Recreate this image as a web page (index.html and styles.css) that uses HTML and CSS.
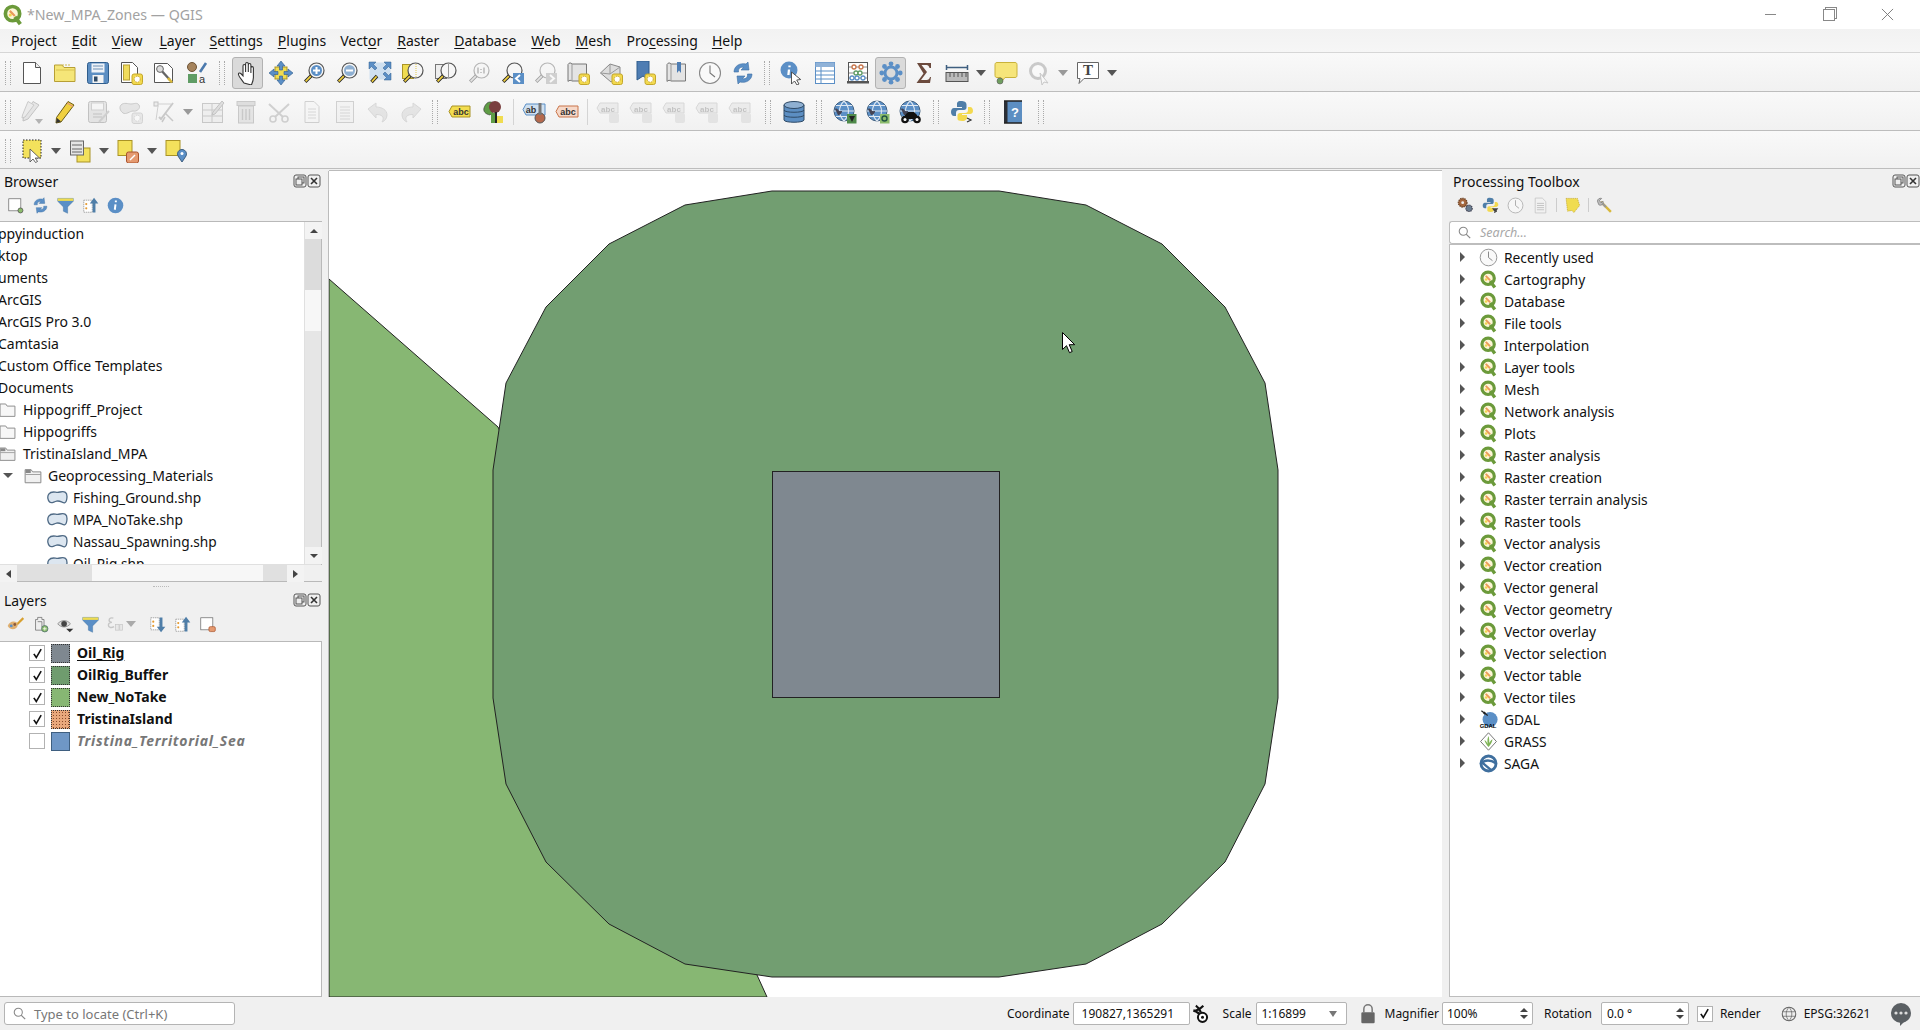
FILE: index.html
```html
<!DOCTYPE html>
<html lang="en">
<head>
<meta charset="utf-8">
<title>*New_MPA_Zones — QGIS</title>
<link rel="stylesheet" href="styles.css">
</head>
<body>
<svg class="defs" aria-hidden="true">
<defs>
<g id="mg"><circle cx="14.5" cy="9.5" r="7.5" fill="#f6f6f6" stroke="#555" stroke-width="1.2"/><path d="M9.2 14.8 3.2 20.8" stroke="#222" stroke-width="3.4"/><path d="M8.8 15.2 3.6 20.4" stroke="#f0d040" stroke-width="1.7"/></g>
<g id="gb"><rect x="13" y="13" width="10.5" height="10.5" rx="2" fill="#f2d94e" stroke="#c4a72a"/><circle cx="18.2" cy="18.2" r="3" fill="#fff" stroke="#c9a227" stroke-dasharray="1.5 1"/></g>
</defs>
<symbol id="new" viewBox="0 0 24 24"><path d="M3.5 1.5h12l5 5v16h-17z" fill="#fff" stroke="#555"/><path d="M15.5 1.5v5h5" fill="#eee" stroke="#555"/></symbol>
<symbol id="open" viewBox="0 0 24 24"><path d="M1.5 20.5V4h7.5l2 2.5h11v14z" fill="#f5e678" stroke="#b79f35"/><path d="M3 9h18" stroke="#d9c24e"/><path d="M9 4h9" stroke="#cdb74a" stroke-dasharray="2 1"/></symbol>
<symbol id="save" viewBox="0 0 24 24"><rect x="1.5" y="1.5" width="21" height="21" rx="2" fill="#5c8ec2" stroke="#2f5d8c"/><rect x="5.5" y="2.5" width="13" height="9" fill="#eef2f7"/><path d="M7 5h10M7 8h10" stroke="#6c90b5"/><rect x="6.5" y="14" width="11" height="8" fill="#f3f3f3"/><rect x="8" y="15.5" width="3.5" height="5" fill="#2f4a66"/></symbol>
<symbol id="layout" viewBox="0 0 24 24"><path d="M2.5 1.5h11l5 5v15h-16z" fill="#fff" stroke="#555"/><rect x="4.5" y="4" width="6" height="15" fill="#f0dc5c" stroke="#b79f35"/><use href="#gb"/></symbol>
<symbol id="laym" viewBox="0 0 24 24"><path d="M2.5 2.5h13l5 5v14h-18z" fill="#fff" stroke="#555"/><path d="M8 8l10 11" stroke="#666" stroke-width="2.4"/><circle cx="8" cy="8" r="3.4" fill="#ddd" stroke="#666"/><path d="M16 17l4 4.500" stroke="#d8b83a" stroke-width="2.600"/></symbol>
<symbol id="style" viewBox="0 0 24 24"><circle cx="7" cy="6" r="4.500" fill="#a5835c" stroke="#6e5335"/><path d="M15 11 21 2" stroke="#4b79ad" stroke-width="2.600"/><rect x="3" y="13" width="9" height="9" fill="#5f9c64"/><text x="14" y="22" class="svt">a</text></symbol>
<symbol id="hand" viewBox="0 0 24 24"><path d="M8 22c-2-3-5-6-5.500-8.500-.3-1.500 1.300-2 2.300-1L7 14.800V5c0-2 2.600-2 2.600 0v6-8c0-2 2.700-2 2.700 0v8-7c0-2 2.600-2 2.600 0v8-5c0-1.800 2.500-1.800 2.500 0v9.500c0 3-1 5-2 7.500z" fill="#fff" stroke="#333" stroke-width="1.100"/></symbol>
<symbol id="pansel" viewBox="0 0 24 24"><rect x="6" y="6" width="12" height="12" fill="#f0dc50" stroke="#a99326"/><path d="M12 0l4 5h-2.500v4h-3V5H8zM12 24l4-5h-2.500v-4h-3v4H8zM0 12l5-4v2.500h4v3H5V16zM24 12l-5-4v2.500h-4v3h4V16z" fill="#5b8fc6" stroke="#2f5d8c" stroke-width=".6"/></symbol>
<symbol id="zin" viewBox="0 0 24 24"><use href="#mg"/><circle cx="14.500" cy="9.500" r="5.500" fill="#5b8fc6"/><path d="M14.500 6v7M11 9.500h7" stroke="#fff" stroke-width="2"/></symbol>
<symbol id="zout" viewBox="0 0 24 24"><use href="#mg"/><circle cx="14.500" cy="9.500" r="5.500" fill="#8fb0d2"/><path d="M11 9.500h7" stroke="#fff" stroke-width="2"/></symbol>
<symbol id="zfull" viewBox="0 0 24 24"><rect x="1.500" y="1.500" width="21" height="17" fill="#cfe0f0"/><path d="M1 1h7L5.500 3.500 9 7 7 9 3.500 5.500 1 8zM23 1h-7l2.500 2.500L15 7l2 2 3.500-3.500L23 8zM23 19h-7l2.500-2.500L15 13l2-2 3.500 3.500L23 12z" fill="#5b8fc6" stroke="#2f5d8c" stroke-width=".5"/><path d="M9 15 3.500 21" stroke="#222" stroke-width="3.400"/><path d="M8.600 15.400 3.900 20.600" stroke="#f0d040" stroke-width="1.700"/></symbol>
<symbol id="zsel" viewBox="0 0 24 24"><rect x="1.500" y="3.500" width="11" height="14" fill="#f0dc50" stroke="#a99326"/><use href="#mg"/><path d="M15 3v13" stroke="#e0c94a" stroke-dasharray="1 1"/></symbol>
<symbol id="zlay" viewBox="0 0 24 24"><rect x="1.500" y="3.500" width="11" height="14" fill="#eee" stroke="#777"/><use href="#mg"/><path d="M14.500 3v13" stroke="#999"/></symbol>
<symbol id="znat" viewBox="0 0 24 24"><use href="#mg"/><path d="M11 6.500v6M14 8v1M14 11v1M17 6.500v6" stroke="#555" stroke-width="1.400"/></symbol>
<symbol id="zlast" viewBox="0 0 24 24"><use href="#mg"/><rect x="13" y="12" width="11" height="11" fill="#5b8fc6"/><path d="M20 14l-4 3.500 4 3.500" fill="none" stroke="#fff" stroke-width="2"/></symbol>
<symbol id="znext" viewBox="0 0 24 24"><use href="#mg"/><rect x="13" y="12" width="11" height="11" fill="#9a9a9a"/><path d="M17 14l4 3.500-4 3.500" fill="none" stroke="#fff" stroke-width="2"/></symbol>
<symbol id="map" viewBox="0 0 24 24"><path d="M2 3.500C3 1.500 5 1.500 6 3h14.500v17H6c-1-1-3-1-4 .5z" fill="#e4e4e4" stroke="#777"/><path d="M6 3v17" stroke="#999"/><use href="#gb"/></symbol>
<symbol id="map3" viewBox="0 0 24 24"><path d="M1.500 12 11 3l10 3v9l-9 6z" fill="#ddd" stroke="#888"/><path d="M11 3v10l-9.500-1M11 13l10-7" stroke="#999" fill="none"/><use href="#gb"/></symbol>
<symbol id="bmk" viewBox="0 0 24 24"><path d="M5 0h12v19l-6-4-6 4z" fill="#4e7db3" stroke="#2f5d8c"/><use href="#gb"/></symbol>
<symbol id="bmks" viewBox="0 0 24 24"><path d="M2 3.500C3 1.500 5 1.500 6 3h14.500v17H6c-1-1-3-1-4 .5z" fill="#e4e4e4" stroke="#777"/><path d="M6 3v17" stroke="#999"/><path d="M12 1h4v11l-2-2.500-2 2.500z" fill="#4e7db3"/></symbol>
<symbol id="clock" viewBox="0 0 24 24"><circle cx="12" cy="12" r="10.500" fill="#f9f9f9" stroke="#888" stroke-width="1.100"/><path d="M12 4.500V12l5 4" fill="none" stroke="#777" stroke-width="1.100"/></symbol>
<symbol id="refr" viewBox="0 0 24 24"><path d="M3 11C3 5 9 1.500 15 3l2-2 1 8h-8l2.500-2.500C9 5.500 7 8 7.500 11z" fill="#5b8fc6" stroke="#3a6da3" stroke-width=".6"/><path d="M21 13c0 6-6 9.500-12 8l-2 2-1-8h8l-2.500 2.500c3.500 1 5.500-1.500 5-4.500z" fill="#5b8fc6" stroke="#3a6da3" stroke-width=".6"/></symbol>
<symbol id="ident" viewBox="0 0 24 24"><circle cx="9" cy="9" r="8.500" fill="#5b8fc6"/><path d="M9.500 4.500v1.800M9 8.500 8.400 14" stroke="#fff" stroke-width="2.300"/><path d="M11.500 11v12l3-3 2.500 4 2-1-2.300-4 4-.5z" fill="#fff" stroke="#444" stroke-width=".9"/></symbol>
<symbol id="table" viewBox="0 0 24 24"><rect x="2.500" y="1.500" width="19" height="21" fill="#fff" stroke="#5b8fc6"/><rect x="2.500" y="1.500" width="19" height="4.500" fill="#8fb2d8"/><path d="M3 10h18M3 14h18M3 18h18M8 6v16" stroke="#5b8fc6"/></symbol>
<symbol id="abac" viewBox="0 0 24 24"><rect x="2.500" y="1.500" width="19" height="19" fill="#fff" stroke="#555"/><rect x="1" y="20" width="22" height="2.500" fill="#555"/><path d="M3 6h18M3 12h18M3 17h18" stroke="#888"/><g fill="#fff" stroke-width="1.300"><circle cx="8" cy="6" r="2" stroke="#c9754a"/><circle cx="15" cy="6" r="2" stroke="#c9754a"/><circle cx="10" cy="12" r="2" stroke="#5f9c64"/><circle cx="14" cy="12" r="2" stroke="#5f9c64"/><circle cx="6" cy="17" r="2" stroke="#5b8fc6"/><circle cx="11" cy="17" r="2" stroke="#5b8fc6"/><circle cx="17" cy="17" r="2" stroke="#5b8fc6"/></g></symbol>
<symbol id="tbx" viewBox="0 0 24 24"><circle cx="12" cy="12" r="6" fill="none" stroke="#5b8fc6" stroke-width="3"/><g fill="#5b8fc6"><circle cx="12" cy="2.800" r="2.400"/><circle cx="12" cy="21.200" r="2.400"/><circle cx="2.800" cy="12" r="2.400"/><circle cx="21.200" cy="12" r="2.400"/><circle cx="5.500" cy="5.500" r="2.400"/><circle cx="18.500" cy="18.500" r="2.400"/><circle cx="5.500" cy="18.500" r="2.400"/><circle cx="18.500" cy="5.500" r="2.400"/></g></symbol>
<symbol id="sum" viewBox="0 0 24 24"><path d="M5 2h14v5h-1.500c-.5-2-1.500-3-3-3H9.500l5.500 7-6 8h5.500c2 0 3-1 3.500-3H19l-1 6H4.500l7-9.500z" fill="#6b4a3d"/></symbol>
<symbol id="ruler" viewBox="0 0 24 24"><path d="M1.500 4v5M22.500 4v5M2 6.500h20" stroke="#3f5f80" stroke-width="1.500"/><rect x="1" y="11.500" width="22" height="9" fill="#bbb" stroke="#555"/><path d="M5 12v4M9 12v4M13 12v4M17 12v4M21 12v4" stroke="#555"/></symbol>
<symbol id="tip" viewBox="0 0 24 24"><path d="M3 1.500h18c1.500 0 2 1 2 2v11c0 1-.5 2-2 2H11l-4 5v-5H3c-1.500 0-2-1-2-2v-11c0-1 .5-2 2-2z" fill="#f6e57a" stroke="#c9b23a"/><circle cx="6" cy="20" r="3" fill="#6f9e5f" stroke="#555" stroke-width=".6"/></symbol>
<symbol id="qtool" viewBox="0 0 24 24"><circle cx="11" cy="10" r="7.500" fill="#fff" stroke="#888" stroke-width="3"/><path d="M13 12l8 10-4-1-2 3z" fill="#fff" stroke="#888"/></symbol>
<symbol id="annot" viewBox="0 0 24 24"><path d="M1.500 1.500h21v16H8l-5 5 1-5H1.500z" fill="#fff" stroke="#666"/><text x="12" y="14" text-anchor="middle" class="svs">T</text></symbol>
<symbol id="pen" viewBox="0 0 24 24"><path d="M15 1.500 21 5 8 22l-5 1 .5-5.500z" fill="#f0d040" stroke="#6b5c16"/><path d="M4 18l4 3.500L3 23z" fill="#333"/><path d="M14 3l6 3.500" stroke="#d88"/></symbol>
<symbol id="pens" viewBox="0 0 24 24"><path d="M13 1.500 19 5 8 19l-5 2 .5-5.500z" fill="#ccc" stroke="#777"/><path d="M8 1.500 14 5 5 17l-3 1 .5-3z" fill="#ddd" stroke="#888"/><path d="M15 19h8l-4 5z" fill="#555"/></symbol>
<symbol id="savee" viewBox="0 0 24 24"><rect x="2.500" y="1.500" width="18" height="21" rx="2" fill="#ccc" stroke="#777"/><rect x="5.500" y="3" width="12" height="7" fill="#f4f4f4" stroke="#999"/><path d="M7 14h9M7 17h9" stroke="#777"/><path d="M13 22 23 11" stroke="#999" stroke-width="2"/></symbol>
<symbol id="addf" viewBox="0 0 24 24"><path d="M2 5c3-3 7-1 10-1s6-2 8 1c2 3-2 7-6 6-3 0-7 4-10 2C1 11 0 7 2 5z" fill="#ccc" stroke="#888"/><use href="#gb"/></symbol>
<symbol id="vert" viewBox="0 0 24 24"><rect x="2" y="2" width="4" height="4" fill="#ddd" stroke="#777"/><path d="M6 6 4 20M6 4h13" stroke="#999"/><path d="M21 3 9 19l-2-2" stroke="#888" stroke-width="2" fill="none"/><path d="M13 13l8 8M10 22l3-5" stroke="#888" stroke-width="1.500"/></symbol>
<symbol id="multi" viewBox="0 0 24 24"><rect x="1.500" y="3.500" width="20" height="19" fill="#e6e6e6" stroke="#888"/><path d="M2 10h19M2 16h19M11 4v18" stroke="#888"/><path d="M21 1l2 2-9 11-3 1 1-3z" fill="#bbb" stroke="#777"/></symbol>
<symbol id="del" viewBox="0 0 24 24"><rect x="3" y="1.500" width="18" height="4" fill="#bbb" stroke="#888"/><rect x="4.500" y="6" width="15" height="17" fill="#ccc" stroke="#888"/><path d="M8.500 9v11M12 9v11M15.500 9v11" stroke="#888" stroke-width="1.400"/></symbol>
<symbol id="cut" viewBox="0 0 24 24"><path d="M2 4l14 13M22 4 8 17" stroke="#999" stroke-width="2"/><circle cx="6" cy="19" r="3" fill="none" stroke="#999" stroke-width="1.600"/><circle cx="18" cy="19" r="3" fill="none" stroke="#999" stroke-width="1.600"/></symbol>
<symbol id="copy" viewBox="0 0 24 24"><path d="M5 1.500h9l5 5v16H5z" fill="#f5f5f5" stroke="#999"/><path d="M8 9h8M8 12h8M8 15h8M8 18h8" stroke="#aaa"/></symbol>
<symbol id="paste" viewBox="0 0 24 24"><rect x="3.500" y="1.500" width="17" height="21" fill="#eee" stroke="#999"/><path d="M7 7h10M7 10h10M7 13h10M7 16h10M7 19h10" stroke="#aaa"/></symbol>
<symbol id="undo" viewBox="0 0 24 24"><path d="M2 9 10 3v4c6 0 11 3 11 8 0 3-2 6-5 7 1-2 2-4 0-6-1-1-3-1.500-6-1.500V18z" fill="#ccc" stroke="#aaa"/></symbol>
<symbol id="redo" viewBox="0 0 24 24"><path d="M22 9 14 3v4C8 7 3 10 3 15c0 3 2 6 5 7-1-2-2-4 0-6 1-1 3-1.500 6-1.500V18z" fill="#ccc" stroke="#aaa"/></symbol>
<symbol id="lab" viewBox="0 0 24 24"><path d="M4 6h18v11H4L1 11.500z" fill="#f3dd4f" stroke="#a99326"/><text x="13" y="15" text-anchor="middle" class="svl">abc</text></symbol>
<symbol id="dia" viewBox="0 0 24 24"><path d="M9 2a7 8 0 0 1 7 6l-7 7C4 14 2 11 3 8s3-6 6-6z" fill="#5f9c46" stroke="#333" stroke-width=".6"/><circle cx="14" cy="7" r="6" fill="#7a3f3f"/><rect x="10" y="13" width="5" height="10" fill="#5f9c46"/><rect x="15" y="16" width="7" height="7" fill="#f0dc50"/><path d="M15 12v11" stroke="#222" stroke-width="2"/></symbol>
<symbol id="labp" viewBox="0 0 24 24"><path d="M4 4h19v11H4L1 9.500z" fill="#cfe0f0" stroke="#5b8fc6"/><text x="9" y="13" text-anchor="middle" class="svl">ab</text><circle cx="18" cy="18" r="5" fill="#b5694d" stroke="#555"/><path d="M18 3v12" stroke="#777" stroke-width="3"/></symbol>
<symbol id="labo" viewBox="0 0 24 24"><path d="M4 6h19v11H4L1 11.500z" fill="#f6d8c8" stroke="#c9754a"/><text x="13" y="15" text-anchor="middle" class="svl">abc</text></symbol>
<symbol id="labg" viewBox="0 0 24 24"><path d="M4 3h18v10H4L1 8z" fill="#ddd" stroke="#aaa"/><text x="12" y="11.500" text-anchor="middle" class="svg">abc</text><rect x="13" y="13" width="10" height="10" rx="2" fill="#ccc"/></symbol>
<symbol id="db" viewBox="0 0 24 24"><path d="M2 5v15c0 3 20 3 20 0V5z" fill="#5c8ec2" stroke="#2f4a66"/><ellipse cx="12" cy="5" rx="10" ry="3.500" fill="#8fb0d2" stroke="#2f4a66"/><path d="M2 10c0 3 20 3 20 0M2 15c0 3 20 3 20 0" fill="none" stroke="#2f4a66"/></symbol>
<symbol id="globe" viewBox="0 0 24 24"><circle cx="11" cy="11" r="10" fill="#5b8fc6" stroke="#3f5f80"/><path d="M11 1c-6 6-6 14 0 20 6-6 6-14 0-20zM1 11h20M3 5.500h16M3 16.500h16" fill="none" stroke="#dfe8f2" stroke-width="1.100"/><path d="M2 9c3-2 3 3 6 2s-1 5-3 4z" fill="#445"/></symbol>
<symbol id="globe1" viewBox="0 0 24 24"><use href="#globe"/><rect x="14" y="14" width="9.500" height="9.500" fill="#4f8a4a"/><path d="M16 16h6l-3 6z" fill="#222"/></symbol>
<symbol id="globe2" viewBox="0 0 24 24"><use href="#globe"/><rect x="14" y="14" width="9.500" height="9.500" fill="#8cbc6c"/><circle cx="18.500" cy="18.500" r="2.500" fill="none" stroke="#254" stroke-width="1.400"/></symbol>
<symbol id="globe3" viewBox="0 0 24 24"><use href="#globe"/><circle cx="6" cy="19.500" r="3.800" fill="#111"/><circle cx="18" cy="19.500" r="3.800" fill="#111"/><path d="M6 15l3-3h6l3 3v4H6z" fill="#111"/><circle cx="6" cy="19.500" r="1.500" fill="#fff"/><circle cx="18" cy="19.500" r="1.500" fill="#fff"/></symbol>
<symbol id="py" viewBox="0 0 24 24"><path d="M11 1C7 1 7 3 7 4.500V7h5v1H4C2 8 1 10 1 12s1 4 3 4h2v-3c0-2 1-3 3-3h5c1.500 0 2.500-1 2.500-2.500V4.500C16.500 2 14 1 11 1z" fill="#4f7ea8"/><path d="M12 21c4 0 5-2 5-3.500V15h-5v-1h8c1.500 0 3-1 3-3s-1-4-3-4h-2v3c0 2-1 3-3 3h-5c-1.500 0-2.500 1-2.500 2.500v3.500C7.500 20 9 21 12 21z" fill="#f3d94f"/><path d="M17 18l4 2-4 2" fill="none" stroke="#333" stroke-width="1.200"/></symbol>
<symbol id="help" viewBox="0 0 24 24"><rect x="3" y="1" width="18" height="22" fill="#5c8ec2"/><rect x="3" y="1" width="3.500" height="22" fill="#2b2f36"/><path d="M3 1h18M3 23h18" stroke="#222" stroke-width="1.500"/><text x="14" y="17" text-anchor="middle" class="svh">?</text></symbol>
<symbol id="sel" viewBox="0 0 24 24"><rect x="3" y="1" width="18" height="18" fill="#f3e15c" stroke="#222" stroke-dasharray="1.500 1.500"/><path d="M10 10v13l3-3 2.500 3.500 2-1-2.300-3.500h4.300z" fill="#fff" stroke="#555" stroke-width=".9"/></symbol>
<symbol id="selat" viewBox="0 0 24 24"><rect x="9" y="9" width="13" height="14" fill="#f3e15c" stroke="#a99326"/><rect x="2.500" y="2" width="13" height="14" fill="#e4e4e4" stroke="#666"/><path d="M4 6h10M4 10h10M4 13h10" stroke="#666"/></symbol>
<symbol id="desel" viewBox="0 0 24 24"><rect x="2" y="1.500" width="14" height="15" fill="#f3e15c" stroke="#a99326"/><rect x="10.500" y="13" width="12" height="11" rx="2" fill="#e59a70" stroke="#a9532c"/><path d="M14 21l5-5" stroke="#fff" stroke-width="1.500"/></symbol>
<symbol id="selpin" viewBox="0 0 24 24"><rect x="2" y="1.500" width="14" height="15" fill="#f3e15c" stroke="#a99326"/><path d="M18 23l-4-6a4.500 4.500 0 1 1 8 0z" fill="#5b8fc6" stroke="#3f5f80"/><circle cx="18" cy="14.500" r="1.500" fill="#fff"/></symbol>
<symbol id="addnew" viewBox="0 0 24 24"><rect x="2.500" y="2.500" width="17" height="17" fill="#fff" stroke="#666"/><circle cx="19" cy="19" r="3.500" fill="#8cbc6c" stroke="#444"/></symbol>
<symbol id="filt" viewBox="0 0 24 24"><path d="M1 2h22v4l-8 8v9l-6-3v-6L1 6z" fill="#5b8fc6" stroke="#3f6f9e" stroke-width=".6"/><rect x="1" y="2" width="22" height="3.500" fill="#f0dc50"/></symbol>
<symbol id="coll" viewBox="0 0 24 24"><rect x="2.500" y="4.500" width="12" height="17" fill="#fff" stroke="#888" stroke-dasharray="2 1"/><circle cx="6" cy="10" r="1.500" fill="#e59a30"/><circle cx="6" cy="16" r="1.500" fill="#e59a30"/><path d="M17 1l6 8h-4v13h-4V9h-4z" fill="#4f7ea8"/></symbol>
<symbol id="expa" viewBox="0 0 24 24"><rect x="2.500" y="2.500" width="12" height="17" fill="#fff" stroke="#888" stroke-dasharray="2 1"/><circle cx="6" cy="8" r="1.500" fill="#e59a30"/><circle cx="6" cy="14" r="1.500" fill="#e59a30"/><path d="M17 23l6-8h-4V2h-4v13h-4z" fill="#4f7ea8"/></symbol>
<symbol id="info" viewBox="0 0 24 24"><circle cx="12" cy="12" r="11" fill="#5b8fc6"/><path d="M12.500 5v2.500M12 10.500 11 18" stroke="#fff" stroke-width="2.800"/></symbol>
<symbol id="style2" viewBox="0 0 24 24"><path d="M14 12 23 3" stroke="#d8a030" stroke-width="3"/><path d="M1 14c2-6 8-8 13-5 2 3 1 6-1 8-4 3-9 2-12-3z" fill="#e0b070"/><circle cx="6" cy="14" r="2" fill="#5b8fc6"/><circle cx="11" cy="12" r="2" fill="#8c5a3a"/></symbol>
<symbol id="addg" viewBox="0 0 24 24"><path d="M8 2h6v3h3v15H5V5h3z" fill="#eee" stroke="#666"/><path d="M8 8h6v8" fill="none" stroke="#666"/><circle cx="18" cy="18" r="4.500" fill="#8cbc6c" stroke="#466"/><path d="M18 15.500v5M15.500 18h5" stroke="#fff"/></symbol>
<symbol id="eye" viewBox="0 0 24 24"><path d="M1 11c5-6 13-6 18 0-5 6-13 6-18 0z" fill="#ddd" stroke="#777"/><circle cx="10" cy="11" r="4" fill="#444"/><path d="M13 18h10l-5 5z" fill="#333"/></symbol>
<symbol id="eps" viewBox="0 0 24 24"><path d="M9 3C6 2 3 3 3 6c0 2 2 3 4 3-2 0-5 1-5 4 0 4 5 4 8 2" fill="none" stroke="#888" stroke-width="2"/><rect x="12" y="12" width="5" height="8" fill="#ddd" stroke="#888"/><rect x="18" y="12" width="4" height="8" fill="#ddd" stroke="#888"/></symbol>
<symbol id="rmv" viewBox="0 0 24 24"><rect x="2.500" y="2.500" width="17" height="17" fill="#fff" stroke="#666"/><rect x="14" y="15" width="9" height="7" rx="2" fill="#e59a70" stroke="#a9532c"/></symbol>
<symbol id="q" viewBox="0 0 24 24"><circle cx="11.500" cy="10.500" r="7.800" fill="#fdf6d8" stroke="#6b9a3a" stroke-width="4"/><path d="M14 14l6 8" stroke="#6b9a3a" stroke-width="4.200"/><path d="M8.500 7.500 14 13" stroke="#ea9a5a" stroke-width="2.400"/><circle cx="9" cy="12" r="1.700" fill="#f1d34c"/></symbol>
<symbol id="gear2" viewBox="0 0 24 24"><circle cx="8" cy="8" r="6" fill="#a5683f" stroke="#6e4324" stroke-dasharray="2 1" stroke-width="2"/><circle cx="8" cy="8" r="2" fill="#eee"/><circle cx="17" cy="16" r="4.500" fill="#6a7c8e" stroke="#445" stroke-dasharray="2 1" stroke-width="1.600"/></symbol>
<symbol id="py2" viewBox="0 0 24 24"><use href="#py"/><path d="M14 16h9l-4.500 6z" fill="#444"/></symbol>
<symbol id="doc" viewBox="0 0 24 24"><path d="M4.500 1.500h10l5 5v16h-15z" fill="#f2f2f2" stroke="#aaa"/><path d="M7 9h10M7 12h10M7 15h10M7 18h10" stroke="#999"/></symbol>
<symbol id="edit2" viewBox="0 0 24 24"><path d="M3 2h16l3 10-8 10-3-3-6 1z" fill="#f0dc50" stroke="#c4a72a" stroke-dasharray="2 1"/></symbol>
<symbol id="wrench" viewBox="0 0 24 24"><path d="M7 7l14 14" stroke="#d8b83a" stroke-width="3.400"/><path d="M7 7 14 14" stroke="#999" stroke-width="3"/><path d="M2 6c0-3 3-5 6-4L5 5l2 3 3-2c1 4-3 7-6 5z" fill="#bbb" stroke="#777"/></symbol>
<symbol id="gdal" viewBox="0 0 24 24"><circle cx="14" cy="12" r="9.500" fill="#5b8fc6"/><path d="M3 1l8 6" stroke="#222" stroke-width="1.500"/><path d="M6 5l2-2" stroke="#222" stroke-width="3"/><text x="11.500" y="23" text-anchor="middle" class="svd">GDAL</text></symbol>
<symbol id="grass" viewBox="0 0 24 24"><path d="M12 1 22 12 12 23 2 12z" fill="#fff" stroke="#555"/><path d="M12 19C9 15 7 12 7 10c2 1 3 3 4 5-1-4 0-8 1-10 1 3 1 6 1 9 1-2 2-4 4-5 0 3-2 6-5 10z" fill="#7eb356"/></symbol>
<symbol id="saga" viewBox="0 0 24 24"><circle cx="12" cy="12" r="9.500" fill="none" stroke="#3f6f9e" stroke-width="3.600"/><path d="M2 13c5-6 12-6 20-1M3 10l12 10" fill="none" stroke="#3f6f9e" stroke-width="3"/></symbol>
<symbol id="shp" viewBox="0 0 24 24"><path d="M2 7c3-4 7-2 10-2s6-2 9 0 2 11-1 12c-3 0-5-3-9-2s-6 3-8 1-3-6-1-9z" fill="#dce6f0" stroke="#4f6a85" stroke-width="1.500"/></symbol>
<symbol id="fold" viewBox="0 0 24 24"><path d="M1.500 21V3.500h8l2 3h11V21z" fill="#f7f7f7" stroke="#888" stroke-width="1.300"/></symbol>
<symbol id="folo" viewBox="0 0 24 24"><path d="M1.500 21V3.500h8l2 3h11V21z" fill="#f0f0f0" stroke="#888" stroke-width="1.300"/><rect x="2" y="4" width="7" height="4" fill="#888"/><path d="M2 10h20" stroke="#888"/></symbol>
<symbol id="flt" viewBox="0 0 14 14"><rect x="1" y="1" width="12" height="12" rx="2" fill="none" stroke="#555"/><rect x="5" y="3" width="6" height="6" fill="none" stroke="#555"/><rect x="3" y="5" width="6" height="6" fill="#eee" stroke="#555"/></symbol>
<symbol id="cls" viewBox="0 0 14 14"><rect x="1" y="1" width="12" height="12" rx="2" fill="none" stroke="#555"/><path d="M4 4l6 6M10 4l-6 6" stroke="#333" stroke-width="1.600"/></symbol>
<symbol id="srch" viewBox="0 0 16 16"><circle cx="6.500" cy="6.500" r="5" fill="none" stroke="#888" stroke-width="1.300"/><path d="M10 10l5 5" stroke="#888" stroke-width="1.500"/></symbol>
<symbol id="chk" viewBox="0 0 16 16"><path d="M3.500 8.500 6.500 13 12.500 2.500" fill="none" stroke="#111" stroke-width="2"/></symbol>
<symbol id="prj" viewBox="0 0 24 24"><g fill="none" stroke="#111" stroke-width="2.600"><path d="M7 2c3 2 5 5 6 8M4 8c4 1 8 4 10 8M16 2c-4 4-8 6-12 6"/></g><circle cx="15" cy="16" r="5.500" fill="#fff" stroke="#111" stroke-width="2.400"/><circle cx="15" cy="16" r="1.800" fill="#111"/></symbol>
<symbol id="lock" viewBox="0 0 24 24"><path d="M7 10V6a5 5 0 0 1 10 0v4" fill="none" stroke="#777" stroke-width="1.800"/><rect x="4" y="10" width="16" height="13" rx="1.500" fill="#666"/></symbol>
<symbol id="wgs" viewBox="0 0 24 24"><circle cx="12" cy="12" r="9" fill="#eee" stroke="#666" stroke-width="1.400"/><path d="M12 3c-5 5-5 13 0 18 5-5 5-13 0-18zM3 9h18M3 15h18" fill="none" stroke="#666"/></symbol>
<symbol id="msg" viewBox="0 0 24 24"><circle cx="12" cy="11" r="10" fill="#5a5f63"/><path d="M11 20v4l5-5z" fill="#5a5f63"/><circle cx="7" cy="11" r="1.600" fill="#ddd"/><circle cx="12" cy="11" r="1.600" fill="#ddd"/><circle cx="17" cy="11" r="1.600" fill="#ddd"/></symbol>
</svg>

<div class="titlebar">
  <svg class="t-logo"><use href="#q"/></svg>
  <span class="t-text">*New_MPA_Zones — QGIS</span>
  <div class="winbtns">
    <span class="w-min"></span>
    <span class="w-max"></span>
    <svg class="w-close" viewBox="0 0 14 14"><path d="M1 1l12 12M13 1 1 13" stroke="#777"/></svg>
  </div>
</div>

<nav class="menubar">
  <span class="m m1">Pro<u>j</u>ect</span><span class="m m2"><u>E</u>dit</span><span class="m m3"><u>V</u>iew</span><span class="m m4"><u>L</u>ayer</span><span class="m m5"><u>S</u>ettings</span><span class="m m6"><u>P</u>lugins</span><span class="m m7">Vect<u>o</u>r</span><span class="m m8"><u>R</u>aster</span><span class="m m9"><u>D</u>atabase</span><span class="m m10"><u>W</u>eb</span><span class="m m11"><u>M</u>esh</span><span class="m m12">Pro<u>c</u>essing</span><span class="m m13"><u>H</u>elp</span>
</nav>

<div class="toolbar">
  <i class="h hf"></i>
  <b class="b"><svg><use href="#new"/></svg></b><b class="b"><svg><use href="#open"/></svg></b><b class="b"><svg><use href="#save"/></svg></b><b class="b"><svg><use href="#layout"/></svg></b><b class="b"><svg><use href="#laym"/></svg></b><b class="b"><svg><use href="#style"/></svg></b>
  <i class="h"></i>
  <b class="b on"><svg><use href="#hand"/></svg></b><b class="b"><svg><use href="#pansel"/></svg></b><b class="b"><svg><use href="#zin"/></svg></b><b class="b"><svg><use href="#zout"/></svg></b><b class="b"><svg><use href="#zfull"/></svg></b><b class="b"><svg><use href="#zsel"/></svg></b><b class="b"><svg><use href="#zlay"/></svg></b><b class="b dis"><svg><use href="#znat"/></svg></b><b class="b"><svg><use href="#zlast"/></svg></b><b class="b dis"><svg><use href="#znext"/></svg></b><b class="b"><svg><use href="#map"/></svg></b><b class="b"><svg><use href="#map3"/></svg></b><b class="b"><svg><use href="#bmk"/></svg></b><b class="b"><svg><use href="#bmks"/></svg></b><b class="b"><svg><use href="#clock"/></svg></b><b class="b"><svg><use href="#refr"/></svg></b>
  <i class="h hs"></i>
  <b class="b"><svg><use href="#ident"/></svg></b><b class="b"><svg><use href="#table"/></svg></b><b class="b"><svg><use href="#abac"/></svg></b><b class="b on"><svg><use href="#tbx"/></svg></b><b class="b"><svg><use href="#sum"/></svg></b><b class="b"><svg><use href="#ruler"/></svg></b><i class="dd"></i>
  <b class="b"><svg><use href="#tip"/></svg></b><b class="b dis"><svg><use href="#qtool"/></svg></b><i class="dd dd-l"></i><b class="b"><svg><use href="#annot"/></svg></b><i class="dd"></i>
</div>

<div class="toolbar">
  <i class="h hf"></i>
  <b class="b dis"><svg><use href="#pens"/></svg></b><b class="b"><svg><use href="#pen"/></svg></b><b class="b dis"><svg><use href="#savee"/></svg></b><b class="b dis"><svg><use href="#addf"/></svg></b><b class="b dis"><svg><use href="#vert"/></svg></b><i class="dd dd-l"></i>
  <b class="b dis"><svg><use href="#multi"/></svg></b><b class="b dis"><svg><use href="#del"/></svg></b><b class="b dis"><svg><use href="#cut"/></svg></b><b class="b dis"><svg><use href="#copy"/></svg></b><b class="b dis"><svg><use href="#paste"/></svg></b><b class="b dis"><svg><use href="#undo"/></svg></b><b class="b dis"><svg><use href="#redo"/></svg></b>
  <i class="h hs"></i>
  <b class="b"><svg><use href="#lab"/></svg></b><b class="b"><svg><use href="#dia"/></svg></b><i class="sep"></i><b class="b"><svg><use href="#labp"/></svg></b><b class="b"><svg><use href="#labo"/></svg></b><i class="sep"></i>
  <b class="b dis"><svg><use href="#labg"/></svg></b><b class="b dis"><svg><use href="#labg"/></svg></b><b class="b dis"><svg><use href="#labg"/></svg></b><b class="b dis"><svg><use href="#labg"/></svg></b><b class="b dis"><svg><use href="#labg"/></svg></b>
  <i class="h hw"></i>
  <b class="b"><svg><use href="#db"/></svg></b>
  <i class="h"></i>
  <b class="b"><svg><use href="#globe1"/></svg></b><b class="b"><svg><use href="#globe2"/></svg></b><b class="b"><svg><use href="#globe3"/></svg></b>
  <i class="h"></i>
  <b class="b"><svg><use href="#py"/></svg></b>
  <i class="h"></i>
  <b class="b"><svg><use href="#help"/></svg></b>
  <i class="h hw"></i>
</div>

<div class="toolbar tb3">
  <i class="h hf"></i>
  <b class="b"><svg><use href="#sel"/></svg></b><i class="dd dd-n"></i><b class="b"><svg><use href="#selat"/></svg></b><i class="dd dd-n"></i><b class="b"><svg><use href="#desel"/></svg></b><i class="dd dd-n"></i><b class="b"><svg><use href="#selpin"/></svg></b>
</div>

<main class="main">
  <aside class="dock-left">
    <div class="dtitle"><span>Browser</span><svg class="dbtn"><use href="#flt"/></svg><svg class="dbtn"><use href="#cls"/></svg></div>
    <div class="dtools">
      <svg class="s s1"><use href="#addnew"/></svg><svg class="s"><use href="#refr"/></svg><svg class="s"><use href="#filt"/></svg><svg class="s"><use href="#coll"/></svg><svg class="s"><use href="#info"/></svg>
    </div>
    <div class="browser">
      <div class="b-view">
        <div class="rows">
          <div class="r l0">ppyinduction</div>
          <div class="r l0">ktop</div>
          <div class="r l0">uments</div>
          <div class="r l0">ArcGIS</div>
          <div class="r l0">ArcGIS Pro 3.0</div>
          <div class="r l0">Camtasia</div>
          <div class="r l0">Custom Office Templates</div>
          <div class="r l0">Documents</div>
          <div class="r l1"><svg class="ri"><use href="#fold"/></svg>Hippogriff_Project</div>
          <div class="r l1"><svg class="ri"><use href="#fold"/></svg>Hippogriffs</div>
          <div class="r l1"><svg class="ri"><use href="#folo"/></svg>TristinaIsland_MPA</div>
          <div class="r l2"><i class="tw-d"></i><svg class="ri"><use href="#folo"/></svg>Geoprocessing_Materials</div>
          <div class="r l3"><svg class="ri"><use href="#shp"/></svg>Fishing_Ground.shp</div>
          <div class="r l3"><svg class="ri"><use href="#shp"/></svg>MPA_NoTake.shp</div>
          <div class="r l3"><svg class="ri"><use href="#shp"/></svg>Nassau_Spawning.shp</div>
          <div class="r l3"><svg class="ri"><use href="#shp"/></svg>Oil_Rig.shp</div>
        </div>
        <div class="vsb"><span class="sb-btn"><i class="ar-u"></i></span><span class="vt1"></span><span class="vt2"></span><span class="vt3"></span><span class="sb-btn"><i class="ar-dn"></i></span></div>
      </div>
      <div class="hsb"><span class="sb-btn"><i class="ar-l"></i></span><span class="ht1"></span><span class="ht2"></span><span class="ht3"></span><span class="sb-btn"><i class="ar-r"></i></span><span class="corner"></span></div>
    </div>
    <div class="vsplit"><i></i></div>
    <div class="dtitle dt2"><span>Layers</span><svg class="dbtn"><use href="#flt"/></svg><svg class="dbtn"><use href="#cls"/></svg></div>
    <div class="dtools dtl">
      <svg class="s s1"><use href="#style2"/></svg><svg class="s"><use href="#addg"/></svg><svg class="s"><use href="#eye"/></svg><svg class="s"><use href="#filt"/></svg><svg class="s dis"><use href="#eps"/></svg><i class="dd dd-s"></i><svg class="s"><use href="#expa"/></svg><svg class="s"><use href="#coll"/></svg><svg class="s"><use href="#rmv"/></svg>
    </div>
    <div class="layers">
      <div class="lr"><span class="cb"><svg><use href="#chk"/></svg></span><span class="sw sw1"></span><span class="ln ul">Oil_Rig</span></div>
      <div class="lr"><span class="cb"><svg><use href="#chk"/></svg></span><span class="sw sw2"></span><span class="ln">OilRig_Buffer</span></div>
      <div class="lr"><span class="cb"><svg><use href="#chk"/></svg></span><span class="sw sw3"></span><span class="ln">New_NoTake</span></div>
      <div class="lr"><span class="cb"><svg><use href="#chk"/></svg></span><span class="sw sw4"></span><span class="ln">TristinaIsland</span></div>
      <div class="lr"><span class="cb"></span><span class="sw sw5"></span><span class="ln off">Tristina_Territorial_Sea</span></div>
    </div>
  </aside>

  <div class="gutter"></div>

  <section class="canvas-wrap">
    <svg class="canvas" viewBox="329 171 1113 826" preserveAspectRatio="none">
      <polygon points="329,279 498,427 757,975 767,997 329,997" fill="#87b773" stroke="#222" stroke-width="1"/>
      <polygon points="772,191 999,191 1086,205 1162,244 1225,307 1265,383 1278,470 1278,698 1265,784 1225,862 1162,924 1086,964 999,977 772,977 685,964 609,924 546,862 506,784 493,698 493,470 506,383 546,307 609,244 685,205" fill="#729e71" stroke="#222" stroke-width="1"/>
      <rect x="772.500" y="471.500" width="227" height="226" fill="#7f8890" stroke="#222" stroke-width="1"/>
      <path d="M1062.500 332.500v17l4-3.800 3 7 2.700-1.200-3-6.800h5.500z" fill="#fff" stroke="#000" stroke-width="1"/>
    </svg>
  </section>

  <div class="gutter"></div>

  <aside class="dock-right">
    <div class="dtitle dtr"><span>Processing Toolbox</span><svg class="dbtn"><use href="#flt"/></svg><svg class="dbtn"><use href="#cls"/></svg></div>
    <div class="dtools dtp">
      <svg class="s"><use href="#gear2"/></svg><svg class="s"><use href="#py2"/></svg><svg class="s dim"><use href="#clock"/></svg><svg class="s dim"><use href="#doc"/></svg><i class="vs"></i><svg class="s"><use href="#edit2"/></svg><i class="vs"></i><svg class="s"><use href="#wrench"/></svg>
    </div>
    <div class="search"><svg><use href="#srch"/></svg><span>Search...</span></div>
    <div class="tbox">
      <div class="t"><i class="tw"></i><svg><use href="#clock"/></svg>Recently used</div>
      <div class="t"><i class="tw"></i><svg><use href="#q"/></svg>Cartography</div>
      <div class="t"><i class="tw"></i><svg><use href="#q"/></svg>Database</div>
      <div class="t"><i class="tw"></i><svg><use href="#q"/></svg>File tools</div>
      <div class="t"><i class="tw"></i><svg><use href="#q"/></svg>Interpolation</div>
      <div class="t"><i class="tw"></i><svg><use href="#q"/></svg>Layer tools</div>
      <div class="t"><i class="tw"></i><svg><use href="#q"/></svg>Mesh</div>
      <div class="t"><i class="tw"></i><svg><use href="#q"/></svg>Network analysis</div>
      <div class="t"><i class="tw"></i><svg><use href="#q"/></svg>Plots</div>
      <div class="t"><i class="tw"></i><svg><use href="#q"/></svg>Raster analysis</div>
      <div class="t"><i class="tw"></i><svg><use href="#q"/></svg>Raster creation</div>
      <div class="t"><i class="tw"></i><svg><use href="#q"/></svg>Raster terrain analysis</div>
      <div class="t"><i class="tw"></i><svg><use href="#q"/></svg>Raster tools</div>
      <div class="t"><i class="tw"></i><svg><use href="#q"/></svg>Vector analysis</div>
      <div class="t"><i class="tw"></i><svg><use href="#q"/></svg>Vector creation</div>
      <div class="t"><i class="tw"></i><svg><use href="#q"/></svg>Vector general</div>
      <div class="t"><i class="tw"></i><svg><use href="#q"/></svg>Vector geometry</div>
      <div class="t"><i class="tw"></i><svg><use href="#q"/></svg>Vector overlay</div>
      <div class="t"><i class="tw"></i><svg><use href="#q"/></svg>Vector selection</div>
      <div class="t"><i class="tw"></i><svg><use href="#q"/></svg>Vector table</div>
      <div class="t"><i class="tw"></i><svg><use href="#q"/></svg>Vector tiles</div>
      <div class="t"><i class="tw"></i><svg><use href="#gdal"/></svg>GDAL</div>
      <div class="t"><i class="tw"></i><svg><use href="#grass"/></svg>GRASS</div>
      <div class="t"><i class="tw"></i><svg><use href="#saga"/></svg>SAGA</div>
    </div>
  </aside>
</main>

<footer class="status">
  <div class="locator"><svg><use href="#srch"/></svg><span>Type to locate (Ctrl+K)</span></div>
  <div class="st-right">
    <span class="lb">Coordinate</span><span class="fld f-coord">190827,1365291</span>
    <svg class="st-i st-prj"><use href="#prj"/></svg>
    <span class="lb">Scale</span><span class="fld f-scale">1:16899<i class="c-ar"></i></span>
    <svg class="st-i st-lock"><use href="#lock"/></svg>
    <span class="lb">Magnifier</span><span class="fld f-mag">100%<span class="spin"><i class="ar-u"></i><i class="ar-dn"></i></span></span>
    <span class="lb lb-rot">Rotation</span><span class="fld f-rot">0.0 °<span class="spin"><i class="ar-u"></i><i class="ar-dn"></i></span></span>
    <span class="cb cb-st"><svg><use href="#chk"/></svg></span><span class="lb lb-rend">Render</span>
    <svg class="st-i st-wgs"><use href="#wgs"/></svg><span class="lb lb-eps">EPSG:32621</span>
    <svg class="st-i st-msg"><use href="#msg"/></svg>
  </div>
</footer>
</body>
</html>
```
FILE: styles.css
```css
* { box-sizing: border-box; }
html, body { margin: 0; height: 100%; }
body {
  width: 1920px; height: 1030px; overflow: hidden;
  display: flex; flex-direction: column;
  background: #f0f0f0; color: #111;
  font-family: "Noto Sans", "Open Sans", sans-serif; font-size: 13.5px;
}
.defs { display: none; }
.svt { font: 11px "Liberation Sans", sans-serif; fill: #333; }
.svs { font: bold 15px "Liberation Serif", serif; fill: #444; }
.svl { font: bold 9px "Liberation Sans", sans-serif; fill: #333; }
.svg { font: bold 8px "Liberation Sans", sans-serif; fill: #777; }
.svh { font: bold 13px "Liberation Sans", sans-serif; fill: #fff; }
.svd { font: bold 7.500px "Liberation Sans", sans-serif; fill: #000; }

/* title bar */
.titlebar { height: 29px; flex: none; background: #fff; display: flex; align-items: center; padding-left: 2px; }
.t-logo { width: 22px; height: 22px; flex: none; }
.t-text { margin-left: 3px; color: #a2a2a2; font-size: 14.2px; }
.winbtns { margin-left: auto; display: flex; align-items: center; }
.winbtns > * { flex: none; }
.w-min { width: 11px; height: 1px; background: #888; margin-right: 47px; }
.w-max { width: 12px; height: 12px; border: 1px solid #888; margin-right: 46px; box-shadow: 2px -2px 0 -1px #fff, 2px -2px 0 0 #888; }
.w-close { width: 13px; height: 13px; margin-right: 26px; }

/* menu */
.menubar { height: 24px; flex: none; display: flex; align-items: center; padding-left: 11px; gap: 15px;
  background: linear-gradient(#f2f2f2, #f6f6f6); border-bottom: 1px solid #d6d6d6; font-size: 14px; }
.m u { text-underline-offset: 2px; }
.m4 { margin-left: 2px; }
.m5 { margin-left: -1px; }
.m7 { margin-left: -1px; }
.m13 { margin-left: -1px; }

/* toolbars */
.toolbar { height: 39px; flex: none; display: flex; align-items: center; padding-top: 2px;
  background: linear-gradient(#f9f9f9, #f1f1f1); border-bottom: 1px solid #bdbdbd; }
.tb3 { height: 38px; }
.b { width: 33px; height: 33px; flex: none; display: flex; align-items: center; justify-content: center; font-weight: normal; }
.b svg { width: 24px; height: 24px; }
.on { background: #dadada; border: 1px solid #b2b2b2; border-radius: 3px; width: 31px; margin: 0 1px; height: 32px; }
.dis svg, svg.dis { opacity: .4; filter: grayscale(1); }
.h { width: 18px; height: 24px; flex: none; display: flex; justify-content: center; position: relative; }
.h::before { content: ""; width: 4px; border-left: 1px dotted #aaa; border-right: 1px dotted #aaa; }
.hf { width: 15px; }
.hs { width: 16px; }
.hw { width: 19px; margin-left: 2px; }
.sep { width: 8px; height: 26px; flex: none; display: flex; justify-content: center; }
.sep::before { content: ""; width: 1px; background: #d4d4d4; }
.dd { flex: none; width: 16px; display: flex; justify-content: center; }
.dd::before { content: ""; border: 5px solid transparent; border-top: 6px solid #555; border-bottom: 0; }
.dd-l::before { border-top-color: #999; }
.dd-n { width: 15px; }
.dd-s { width: 14px; margin-left: -8px; margin-right: 3px; }
.dd-s::before { border-top-color: #aaa; }

/* layout */
.main { flex: 1; min-height: 0; display: flex; }
.dock-left { width: 322px; flex: none; display: flex; flex-direction: column; }
.gutter { width: 7px; flex: none; }
.canvas-wrap { flex: 1; min-width: 0; padding-top: 2px; display: flex; }
.canvas { width: 100%; height: 100%; background: #fff; display: block; box-shadow: 0 -1px 0 #bbb, -1px 0 0 #bbb; }
.dock-right { width: 471px; flex: none; display: flex; flex-direction: column; }

/* dock chrome */
.dtitle { height: 24px; flex: none; display: flex; align-items: center; padding: 0 1px 0 4px; font-size: 14px; }
.dtitle span { flex: 1; }
.dbtn { width: 14px; height: 14px; flex: none; margin-left: 0; }
.dtools { height: 28px; flex: none; display: flex; align-items: center; padding: 0 0 4px 7px; gap: 8px; }
.s { width: 17px; height: 17px; flex: none; }
.dt2 { height: 22px; padding-bottom: 2px; }
.dtl { height: 29px; gap: 8px; padding-bottom: 5px; }
.dtr { padding-left: 4px; padding-right: 0; }
.dtp { padding-left: 8px; gap: 8px; }
.dim { opacity: .7; }
.vs { width: 1px; height: 14px; background: #ccc; flex: none; margin: 0 -1px; }

/* browser */
.browser { height: 361px; flex: none; border: 1px solid #b9b9b9; border-left: 0; background: #fff; display: flex; flex-direction: column; }
.b-view { flex: 1; min-height: 0; display: flex; }
.rows { flex: 1; min-width: 0; overflow: hidden; font-size: 14px; padding-top: 1px; }
.r { height: 22px; line-height: 22px; display: flex; align-items: center; white-space: nowrap; }
.l0 { margin-left: -2px; }
.l1 { margin-left: -1px; }
.l2 { padding-left: 2px; }
.l3 { padding-left: 47px; font-size: 13.7px; }
.ri { width: 18px; height: 18px; flex: none; margin-right: 7px; }
.l2 .ri { margin-right: 6px; }
.l3 .ri { width: 21px; height: 21px; margin-right: 5px; }
.l1 .ri { width: 17px; }
.tw-d { width: 0; height: 0; flex: none; border: 5px solid transparent; border-top: 5px solid #555; border-bottom: 0; margin: 0 11px 2px 1px; }
.vsb { width: 17px; flex: none; background: #ededed; border-left: 1px solid #e0e0e0; display: flex; flex-direction: column; }
.sb-btn { width: 17px; height: 17px; flex: none; display: flex; align-items: center; justify-content: center; background: #f3f3f3; }
.vt1 { height: 51px; background: #dcdcdc; flex: none; }
.vt2 { height: 41px; background: #f7f7f7; flex: none; }
.vt3 { flex: 1; background: #e6e6e6; }
.hsb { height: 17px; flex: none; display: flex; background: #f7f7f7; border-top: 1px solid #e0e0e0; }
.ht1 { width: 75px; background: #e0e0e0; flex: none; }
.ht2 { width: 171px; flex: none; }
.ht3 { width: 24px; background: #e0e0e0; flex: none; }
.corner { width: 18px; flex: none; background: #f0f0f0; }
.ar-u, .ar-dn, .ar-l, .ar-r { width: 0; height: 0; display: block; border: 4px solid transparent; }
.ar-u { border-top: 0; border-bottom: 4px solid #444; }
.ar-dn { border-bottom: 0; border-top: 4px solid #444; }
.ar-l { border-left: 0; border-right: 5px solid #444; }
.ar-r { border-right: 0; border-left: 5px solid #444; }
.vsplit { height: 8px; flex: none; display: flex; justify-content: center; align-items: center; }
.vsplit i { width: 16px; border-top: 1px dotted #bbb; }

/* layers */
.layers { flex: 1; min-height: 0; background: #fff; border: 1px solid #b9b9b9; border-left: 0; }
.lr { height: 22px; display: flex; align-items: center; }
.cb { width: 16px; height: 16px; flex: none; background: #fff; border: 1px solid #b2b2b2; display: flex; align-items: center; justify-content: center; margin-left: 29px; }
.cb svg { width: 13px; height: 13px; }
.sw { width: 19px; height: 19px; flex: none; margin-left: 6px; border: 1px dotted #333; }
.sw1 { background: #7f8890; }
.sw2 { background: #6f9c6e; }
.sw3 { background: #87b773; }
.sw4 { background: #e9a87c radial-gradient(#8a4b2a 25%, transparent 32%) 0 0 / 3px 3px; }
.sw5 { background: #6f97c6; border: 1px solid #3f5f80; }
.ln { margin: -2px 0 0 7px; font-weight: 700; font-size: 14px; }
.ul { text-decoration: underline; text-underline-offset: 2px; }
.off { font-style: italic; color: #777; letter-spacing: .7px; }

/* toolbox */
.search { height: 23px; flex: none; background: #fff; border: 1px solid #bdbdbd; border-right: 0; border-radius: 3px 0 0 3px; display: flex; align-items: center; padding-left: 8px; }
.search svg { width: 13px; height: 13px; flex: none; }
.search span { margin-left: 9px; font-style: italic; color: #a8a8a8; font-size: 12.500px; }
.tbox { flex: 1; min-height: 0; background: #fff; border: 1px solid #bdbdbd; border-right: 0; padding-top: 1px; font-size: 13.8px; }
.t { height: 22px; display: flex; align-items: center; white-space: nowrap; padding-left: 10px; }
.t svg { width: 19px; height: 19px; flex: none; margin-right: 6px; }
.tw { width: 0; height: 0; flex: none; border: 5px solid transparent; border-left: 5px solid #555; border-right: 0; margin-right: 14px; }

/* status */
.status { height: 33px; flex: none; display: flex; align-items: center; padding-left: 4px; font-size: 12px; }
.locator { width: 231px; height: 23px; flex: none; background: #fff; border: 1px solid #b4b4b4; border-radius: 3px; display: flex; align-items: center; padding-left: 8px; color: #777; font-size: 13px; }
.locator svg { width: 13px; height: 13px; flex: none; }
.locator span { margin-left: 8px; }
.st-right { flex: 1; min-width: 0; display: flex; align-items: center; justify-content: flex-start; padding-left: 772px; white-space: nowrap; }
.lb { flex: none; }
.fld { height: 23px; flex: none; background: #fff; border: 1px solid #b4b4b4; border-radius: 2px; display: flex; align-items: center; margin-left: 4px; position: relative; }
.f-coord { width: 117px; padding-left: 8px; margin-left: 3px; }
.f-scale { width: 91px; padding-left: 5px; }
.f-mag { width: 91px; padding-left: 4px; margin-left: 3px; }
.f-rot { width: 88px; padding-left: 5px; margin-left: 9px; }
.c-ar { position: absolute; right: 9px; top: 8px; border: 4.500px solid transparent; border-top: 6px solid #777; border-bottom: 0; }
.spin { position: absolute; right: 1px; top: 2px; bottom: 2px; width: 14px; display: flex; flex-direction: column; align-items: center; justify-content: center; gap: 3px; }
.spin i { border-width: 4px; }
.st-i { width: 20px; height: 20px; flex: none; }
.st-prj { margin: 0 13px 0 0; }
.st-lock { margin: 0 7px 0 11px; }
.lb-rot { margin-left: 11px; }
.cb-st { margin-left: 8px; }
.lb-rend { margin-left: 7px; }
.st-wgs { margin: 0 6px 0 19px; width: 18px; height: 18px; }
.st-msg { margin-left: 19px; width: 24px; height: 24px; }
```
